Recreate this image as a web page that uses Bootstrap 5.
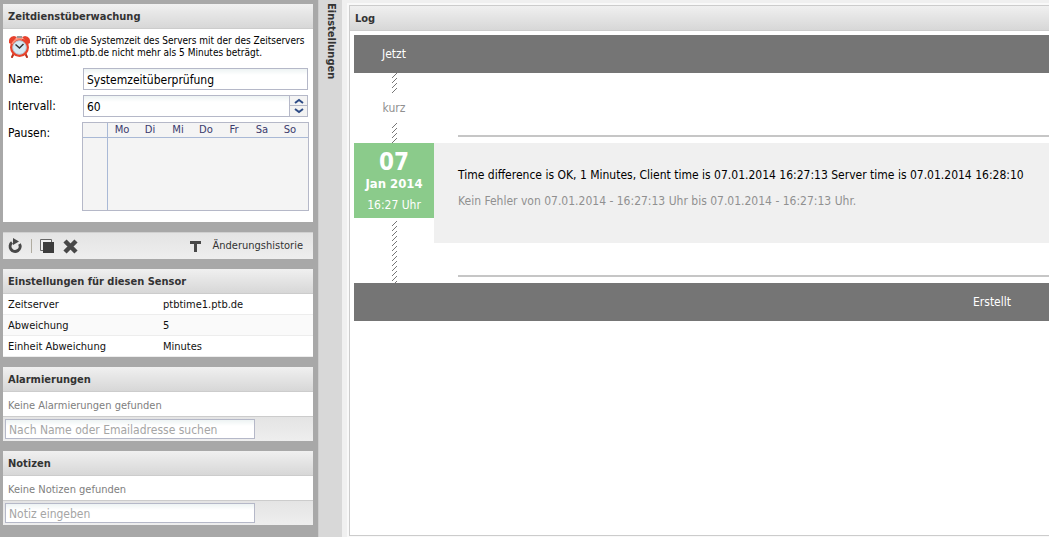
<!DOCTYPE html>
<html lang="de">
<head>
<meta charset="utf-8">
<meta name="viewport" content="width=device-width, initial-scale=1">
<title>Zeitdienstüberwachung</title>
<link href="https://cdn.jsdelivr.net/npm/bootstrap@5.3.0/dist/css/bootstrap.min.css" rel="stylesheet">
<style>
body { font-family: "DejaVu Sans Condensed", "DejaVu Sans", sans-serif; font-stretch: condensed; font-size: 12px; line-height: 16px; color: #000; background: #f0f0f0; }
.sidebar { width: 318px; background: #a8a8a8; padding: 4px 5px 10px 3px; gap: 10px; }
.panel-title { font-size: 11px; line-height: 16px; font-weight: bold; color: #333; margin: 0; padding: 5px 5px 3px; background: linear-gradient(#f0f0f0, #d7d7d7); border-bottom: 1px solid #ccc; }
.intro { font-size: 10px; line-height: 12px; padding: 6px 4px 4px 5px; gap: 5px; }
.fields { padding: 5px 4px 11px 5px; gap: 5px; }
.fields label, .fields .caption-cell { width: 75px; line-height: 22px; }
.field-line { padding-right: 1px; }
.field-box { min-width: 0; font-size: 12px; line-height: 16px; border: 1px solid #b5b8c8; border-radius: 0; padding: 3px 3px 1px; color: #000; background: linear-gradient(#edf3f3, #fff 6px); }
.field-box::placeholder { color: #a5a5a5; opacity: 1; }
.spin button { width: 18px; height: 11px; padding: 0; border: 1px solid #b5b8c8; border-left: 0; background: #f3f3f3; line-height: 0; }
.spin button + button { border-top: 0; }
.pause-table { width: 226px; font: 10px/14px "DejaVu Sans", sans-serif; color: #3b3b6d; background: #f4f4f4; border: 1px solid #b5b8c8; table-layout: fixed; border-collapse: separate; border-spacing: 0; }
.pause-table th { font-weight: normal; text-align: center; padding: 0; height: 15px; width: 28px; border-bottom: 1px solid #a9b9d6; }
.pause-table td { padding: 0; height: 72px; }
.pause-table .hour { width: 25px; border-right: 1px solid #a9b9d6; }
.pause-table .gutter { width: 4px; }
.tool-strip { height: 27px; padding: 0 10px 0 5px; background: linear-gradient(#e4e4e4, #eee); border-top: 1px solid #d0d0d0; font-size: 11px; }
.tool-strip button { border: 0; background: none; padding: 0; line-height: 0; }
.tool-strip .text-action { color: #333; line-height: 16px; }
.divider { width: 1px; height: 14px; background: #b0aca0; }
.settings { font-size: 11px; line-height: 14px; color: #111; }
.settings th, .settings td { font-weight: normal; padding: 4px 5px 2px; border-bottom: 1px solid #ededed; }
.settings th { width: 155px; }
.settings tr:nth-child(2) { background: #fafafa; }
.empty-note { font-size: 11px; line-height: 16px; color: #808080; margin: 0; padding: 6px 5px 2px; }
.entry-strip { background: linear-gradient(#e4e4e4, #eee); border-top: 1px solid #ccc; padding: 2px; }
.entry-strip .field-box { width: 250px; height: 20px; padding: 1px 3px 0; }
.side-tab { width: 24px; background: #d8d8d8; border-left: 1px solid #ccc; padding: 3px 0; }
.side-tab button { writing-mode: vertical-rl; border: 0; background: none; padding: 0; font-size: 11px; line-height: 16px; font-weight: bold; color: #333; }
.log-wrap { padding: 3px 0 0 5px; background: #f0f0f0; }
.log-edge { background: #f9f9f9; padding: 2px 0 1px 2px; }
.log-panel { background: #fff; border: 1px solid #ccc; border-right: 0; }
.log-panel .timeline { padding: 4px 0 0 4px; }
.bar-dark { background: #757575; color: #fff; line-height: 16px; padding: 11px 38px 11px 0; }
.stamp-col { width: 80px; }
.hatch { width: 5px; margin-left: 38px; background: url("data:image/svg+xml,%3Csvg xmlns='http://www.w3.org/2000/svg' width='5' height='5' shape-rendering='crispEdges'%3E%3Cpath fill='%23777' d='M4 0h1v1h-1zM3 1h1v1h-1zM2 2h1v1h-1zM1 3h1v1h-1zM0 4h1v1h-1z'/%3E%3C/svg%3E"); }
.hatch-short { height: 20px; }
.hatch-long { height: 62px; margin-top: 3px; }
.span-note { color: #909090; line-height: 30px; }
.rule { border-top: 2px solid #c6c6c6; margin: 0 0 6px 24px; }
.stamp { background: #8bcb8b; color: #fff; height: 75px; padding-top: 6px; }
.stamp .day { font-size: 24px; line-height: 26px; font-weight: bold; }
.stamp .month { font-size: 13px; line-height: 18px; font-weight: bold; }
.stamp .clock { line-height: 24px; }
.message { background: #f0f0f0; height: 100px; padding: 19px 0 0 24px; white-space: nowrap; }
.message p { line-height: 26px; margin: 0; }
.message .muted-line { color: #909090; }
</style>
</head>
<body>
<div class="d-flex min-vh-100">
  <aside class="sidebar d-flex flex-column flex-shrink-0">
    <section class="bg-white">
      <h2 class="panel-title">Zeitdienstüberwachung</h2>
      <div class="intro d-flex">
        <svg class="flex-shrink-0" width="23" height="24" viewBox="0 0 23 24" aria-hidden="true">
          <path d="M6 18l-2 4M17 18l2 4" stroke="#b5301c" stroke-width="2" stroke-linecap="round"/>
          <path d="M1 8q-1-6 5-7l3 1-6 7zM22 8q1-6-5-7l-3 1 6 7z" fill="#e7412c"/>
          <path d="M9 2h5" stroke="#999" stroke-width="2"/>
          <circle cx="11.500" cy="12.500" r="9.500" fill="#e8432d"/>
          <path d="M4 9q3-6 10-5" stroke="#ff947c" stroke-width="1.500" fill="none"/>
          <circle cx="11.500" cy="12.500" r="6.800" fill="#d5e9f4" stroke="#b7ccd7"/>
          <path d="M7.500 9.500l4 3.500 4-4" stroke="#333" stroke-width="1.500" fill="none"/>
        </svg>
        <div>Prüft ob die Systemzeit des Servers mit der des Zeitservers<br>ptbtime1.ptb.de nicht mehr als 5 Minutes beträgt.</div>
      </div>
      <div class="fields d-flex flex-column">
        <div class="field-line d-flex">
          <label for="name">Name:</label>
          <input id="name" class="field-box flex-grow-1" value="Systemzeitüberprüfung">
        </div>
        <div class="field-line d-flex">
          <label for="interval">Intervall:</label>
          <div class="d-flex flex-grow-1">
            <input id="interval" class="field-box flex-grow-1" value="60">
            <div class="spin d-flex flex-column">
              <button type="button" aria-label="Erhöhen"><svg width="10" height="6" viewBox="0 0 10 6"><path d="M1 5l4-3 4 3" fill="none" stroke="#2d4b86" stroke-width="2"/></svg></button>
              <button type="button" aria-label="Verringern"><svg width="10" height="6" viewBox="0 0 10 6"><path d="M1 1l4 3 4-3" fill="none" stroke="#2d4b86" stroke-width="2"/></svg></button>
            </div>
          </div>
        </div>
        <div class="d-flex">
          <div class="caption-cell">Pausen:</div>
          <table class="pause-table">
            <thead><tr><th class="hour"></th><th>Mo</th><th>Di</th><th>Mi</th><th>Do</th><th>Fr</th><th>Sa</th><th>So</th><th class="gutter"></th></tr></thead>
            <tbody><tr><td class="hour"></td><td colspan="8"></td></tr></tbody>
          </table>
        </div>
      </div>
    </section>

    <div class="tool-strip d-flex align-items-center">
      <button type="button" aria-label="Aktualisieren"><svg width="15" height="16" viewBox="0 0 15 16"><path d="M4 4.500A5 5 0 1 0 11.500 6" fill="none" stroke="#484848" stroke-width="3"/><path d="M5 0l6 3.500-6 3.500z" fill="#484848"/></svg></button>
      <span class="divider ms-2 me-2"></span>
      <button type="button" aria-label="Kopieren"><svg width="15" height="15" viewBox="0 0 15 15"><path d="M.5.500h11v11H.5z" fill="#eee" stroke="#666"/><path d="M3 3h11v11H3z" fill="#3c3c3c"/></svg></button>
      <button type="button" class="ms-2" aria-label="Löschen"><svg width="15" height="15" viewBox="0 0 15 15"><path d="M2 2l11 11M13 2L2 13" stroke="#484848" stroke-width="4.500"/></svg></button>
      <button type="button" class="ms-auto me-2" aria-label="Text"><svg width="11" height="11" viewBox="0 0 11 11"><path d="M0 0h11v3H7v8H4V3H0z" fill="#484848"/></svg></button>
      <button type="button" class="text-action ms-1">Änderungshistorie</button>
    </div>

    <section class="bg-white">
      <h2 class="panel-title">Einstellungen für diesen Sensor</h2>
      <table class="settings w-100">
        <tbody>
          <tr><th scope="row">Zeitserver</th><td>ptbtime1.ptb.de</td></tr>
          <tr><th scope="row">Abweichung</th><td>5</td></tr>
          <tr><th scope="row">Einheit Abweichung</th><td>Minutes</td></tr>
        </tbody>
      </table>
    </section>

    <section class="bg-white">
      <h2 class="panel-title">Alarmierungen</h2>
      <p class="empty-note">Keine Alarmierungen gefunden</p>
      <div class="entry-strip d-flex"><input class="field-box" aria-label="Alarmierung suchen" placeholder="Nach Name oder Emailadresse suchen"></div>
    </section>

    <section class="bg-white">
      <h2 class="panel-title">Notizen</h2>
      <p class="empty-note">Keine Notizen gefunden</p>
      <div class="entry-strip d-flex"><input class="field-box" aria-label="Notiz" placeholder="Notiz eingeben"></div>
    </section>
  </aside>

  <div class="side-tab flex-shrink-0 d-flex justify-content-center align-items-start"><button type="button">Einstellungen</button></div>

  <main class="log-wrap flex-grow-1 d-flex overflow-hidden">
    <div class="log-edge flex-grow-1 d-flex">
      <section class="log-panel flex-grow-1">
        <h2 class="panel-title">Log</h2>
        <div class="timeline">
          <div class="bar-dark d-flex"><div class="stamp-col text-center">Jetzt</div></div>
          <div class="d-flex">
            <div class="stamp-col">
              <div class="hatch hatch-short"></div>
              <div class="span-note text-center">kurz</div>
              <div class="hatch hatch-short"></div>
            </div>
            <div class="flex-grow-1 d-flex flex-column justify-content-end"><div class="rule"></div></div>
          </div>
          <div class="d-flex">
            <div class="stamp-col flex-shrink-0">
              <div class="stamp text-center">
                <div class="day">07</div>
                <div class="month">Jan 2014</div>
                <div class="clock">16:27 Uhr</div>
              </div>
              <div class="hatch hatch-long"></div>
            </div>
            <div class="flex-grow-1 d-flex flex-column justify-content-between">
              <div class="message">
                <p>Time difference is OK, 1 Minutes, Client time is 07.01.2014 16:27:13 Server time is 07.01.2014 16:28:10</p>
                <p class="muted-line">Kein Fehler von 07.01.2014 - 16:27:13 Uhr bis 07.01.2014 - 16:27:13 Uhr.</p>
              </div>
              <div class="rule"></div>
            </div>
          </div>
          <div class="bar-dark text-end">Erstellt</div>
        </div>
      </section>
    </div>
  </main>
</div>
<script src="https://cdn.jsdelivr.net/npm/bootstrap@5.3.0/dist/js/bootstrap.bundle.min.js"></script>
</body>
</html>
